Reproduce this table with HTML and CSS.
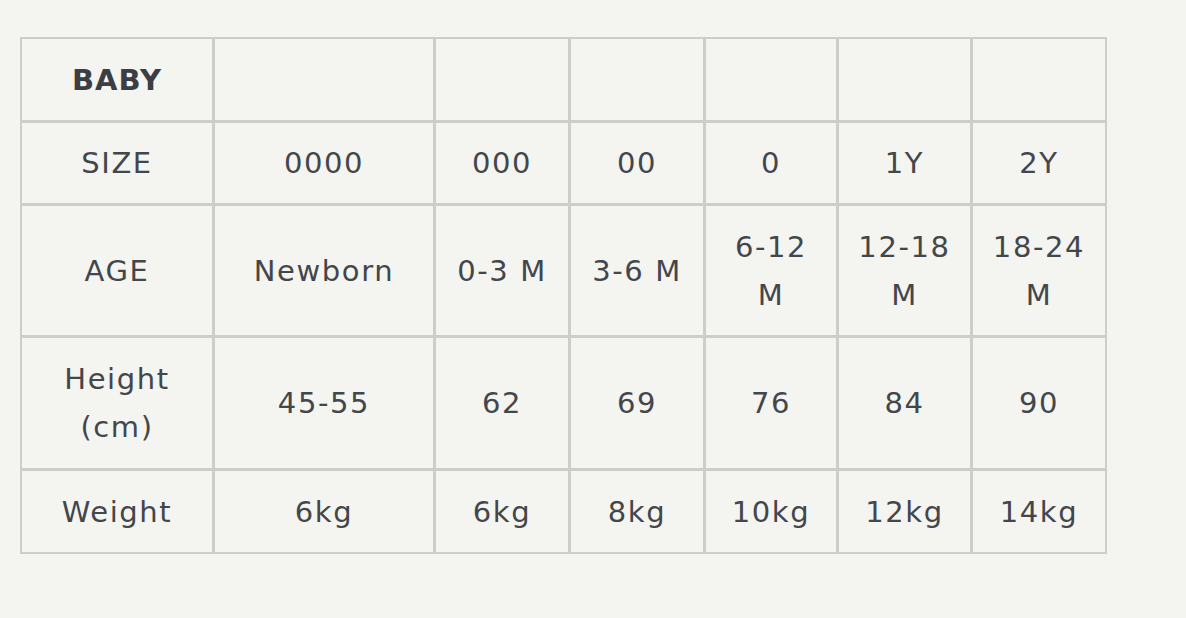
FILE: index.html
```html
<!DOCTYPE html>
<html lang="en">
<head>
<meta charset="utf-8">
<title>Baby size chart</title>
<link rel="stylesheet" href="styles.css">
</head>
<body>
<main class="page">
  <table class="chart">
    <colgroup>
      <col class="c-label">
      <col class="c-wide">
      <col class="c-a">
      <col class="c-a">
      <col class="c-b">
      <col class="c-c">
      <col class="c-c">
    </colgroup>
    <tbody>
      <tr class="r-head">
        <td class="title">BABY</td><td></td><td></td><td></td><td></td><td></td><td></td>
      </tr>
      <tr>
        <td>SIZE</td><td>0000</td><td>000</td><td>00</td><td>0</td><td>1Y</td><td>2Y</td>
      </tr>
      <tr>
        <td>AGE</td><td>Newborn</td><td>0-3 M</td><td>3-6 M</td><td>6-12 M</td><td>12-18 M</td><td>18-24 M</td>
      </tr>
      <tr class="r-tall">
        <td>Height (cm)</td><td>45-55</td><td>62</td><td>69</td><td>76</td><td>84</td><td>90</td>
      </tr>
      <tr>
        <td>Weight</td><td>6kg</td><td>6kg</td><td>8kg</td><td>10kg</td><td>12kg</td><td>14kg</td>
      </tr>
    </tbody>
  </table>
</main>
</body>
</html>
```

FILE: styles.css
```css
html, body {
  margin: 0;
  padding: 0;
  background: #f4f4f0;
}

.page {
  padding: 37px 0 0 20px;
}

.chart {
  border-collapse: separate;
  border-spacing: 0;
  table-layout: fixed;
  width: 1086px;
  border-top: 2px solid #cdcdcb;
  border-left: 2px solid #cdcdcb;
  font-family: "DejaVu Sans", "Liberation Sans", sans-serif;
  font-size: 29px;
  font-weight: 400;
  letter-spacing: 1.6px;
  line-height: 48px;
  color: #43464a;
}

.c-label { width: 193px; }
.c-wide { width: 221px; }
.c-a { width: 135px; }
.c-b { width: 133px; }
.c-c { width: 134px; }

.chart td {
  border-right: 3px solid #cdcdcb;
  border-bottom: 3px solid #cdcdcb;
  padding: 16.5px 16px 16px;
  text-align: center;
  vertical-align: middle;
}

.chart .r-tall td {
  padding-top: 17.5px;
  padding-bottom: 17px;
}

.chart td:last-child {
  border-right-width: 2px;
}

.chart tr:last-child td {
  border-bottom-width: 2px;
}

.chart .r-head td {
  height: 48px;
}

.chart .title {
  font-weight: 700;
  letter-spacing: 1px;
  color: #3b3e42;
}
```
